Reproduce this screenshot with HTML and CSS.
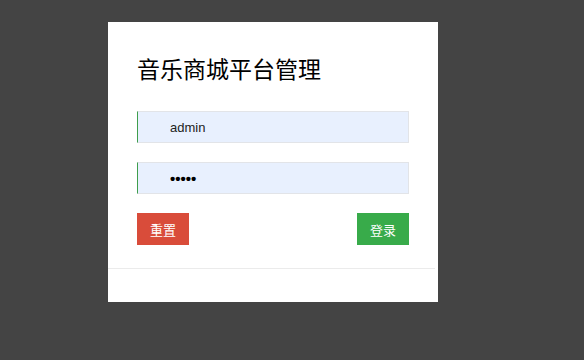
FILE: index.html
```html
<!DOCTYPE html>
<html lang="zh-CN">
<head>
    <meta charset="UTF-8">
    <title>音乐商城平台管理</title>
    <link rel="stylesheet" href="styles.css">
</head>
<body>
    <div class="login-box">
        <h1 class="login-title">音乐商城平台管理</h1>

        <form class="login-form">
            <input class="login-input" type="text" name="username" value="admin">
            <input class="login-input" type="password" name="password" value="admin">

            <div class="login-actions">
                <button type="reset" class="btn btn-reset">重置</button>
                <button type="submit" class="btn btn-login">登录</button>
            </div>
        </form>

        <div class="login-footer"></div>
    </div>
</body>
</html>
```

FILE: styles.css
```css
* {
    margin: 0;
    padding: 0;
    box-sizing: border-box;
}

html, body {
    height: 100%;
}

body {
    background: #444;
    font-family: 'Liberation Sans', 'Noto Sans CJK SC', sans-serif;
    padding: 22px 0 0 108px;
}

.login-box {
    width: 330px;
    height: 280px;
    background: #fff;
    padding-top: 30px;
}

.login-title {
    font-family: 'Noto Sans CJK SC', sans-serif;
    font-size: 23px;
    font-weight: normal;
    line-height: 32px;
    color: #000;
    margin: 0 29px 27px;
}

.login-form {
    display: flex;
    flex-direction: column;
    gap: 19px;
    padding: 0 29px;
}

.login-input {
    width: 272px;
    height: 32px;
    padding-left: 32px;
    background: #e8f0fe;
    border: 1px solid #e2e4e8;
    border-left: 1px solid #3e9e4c;
    font-family: 'Liberation Sans', sans-serif;
    font-size: 13px;
    color: #222;
    outline: none;
}

.login-input[type="password"] {
    font-size: 15px;
    font-weight: bold;
    color: #000;
}

.login-actions {
    display: flex;
    justify-content: space-between;
}

.btn {
    width: 52px;
    height: 32px;
    border: none;
    color: #fff;
    font-family: 'Noto Sans CJK SC', sans-serif;
    font-size: 13px;
    cursor: pointer;
}

.btn-reset {
    background: #d94c3a;
}

.btn-login {
    background: #38ab4a;
}

.login-footer {
    margin: 23px 3px 0 0;
    border-top: 1px solid #ebebeb;
}
```
